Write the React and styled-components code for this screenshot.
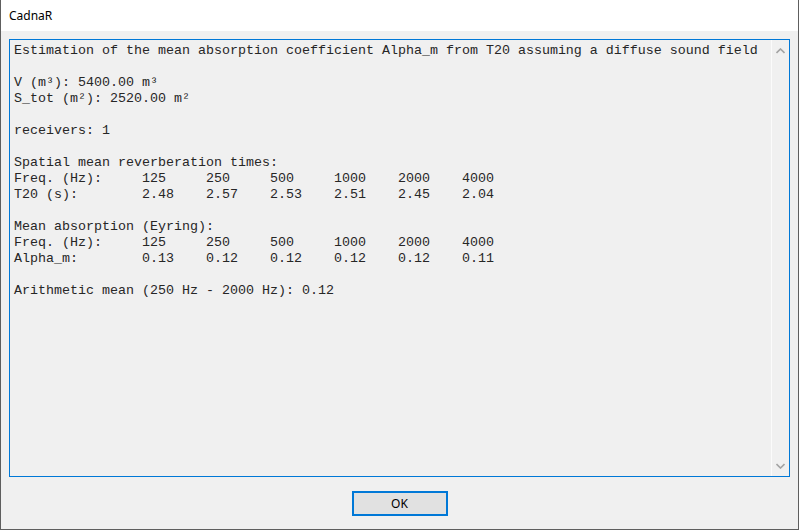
import React from 'react';
import styled, { createGlobalStyle } from 'styled-components';

const GlobalStyle = createGlobalStyle`
  html, body {
    margin: 0;
    padding: 0;
    background: #ffffff;
  }
`;

const freqs = ['125', '250', '500', '1000', '2000', '4000'];
const t20 = ['2.48', '2.57', '2.53', '2.51', '2.45', '2.04'];
const alpha = ['0.13', '0.12', '0.12', '0.12', '0.12', '0.11'];

// one tab-aligned row of the report: label column is 16 chars, values 8 chars each
const row = (label, values) =>
  label.padEnd(16) + values.map((v) => v.padEnd(8)).join('').trimEnd();

const report = [
  'Estimation of the mean absorption coefficient Alpha_m from T20 assuming a diffuse sound field',
  '',
  'V (m³): 5400.00 m³',
  'S_tot (m²): 2520.00 m²',
  '',
  'receivers: 1',
  '',
  'Spatial mean reverberation times:',
  row('Freq. (Hz):', freqs),
  row('T20 (s):', t20),
  '',
  'Mean absorption (Eyring):',
  row('Freq. (Hz):', freqs),
  row('Alpha_m:', alpha),
  '',
  'Arithmetic mean (250 Hz - 2000 Hz): 0.12',
].join('\n');

export default function App() {
  return (
    <>
      <GlobalStyle />
      <Window>
        <TitleBar>CadnaR</TitleBar>
        <Client>
          <TextBox>
            <ReportText>{report}</ReportText>
            <ScrollBar>
              <Arrow viewBox="0 0 9 6">
                <path d="M0.5 5 L4.5 1 L8.5 5" />
              </Arrow>
              <Arrow viewBox="0 0 9 6">
                <path d="M0.5 1 L4.5 5 L8.5 1" />
              </Arrow>
            </ScrollBar>
          </TextBox>
          <Footer>
            <OkButton>OK</OkButton>
          </Footer>
        </Client>
      </Window>
    </>
  );
}

const Window = styled.div`
  width: 799px;
  height: 530px;
  box-sizing: border-box;
  display: flex;
  flex-direction: column;
  border-left: 1px solid #5e5e5e;
  border-right: 1px solid #5e5e5e;
  border-bottom: 1px solid #5e5e5e;
  background: #f0f0f0;
`;

const TitleBar = styled.div`
  height: 31px;
  flex: none;
  background: #ffffff;
  display: flex;
  align-items: center;
  padding-left: 8px;
  padding-bottom: 1px;
  box-sizing: border-box;
  font-family: 'Noto Sans', 'Open Sans', sans-serif;
  font-size: 12px;
  color: #000000;
`;

const Client = styled.div`
  flex: 1;
  display: flex;
  flex-direction: column;
  padding: 8px 8px 0 8px;
`;

const TextBox = styled.div`
  height: 438px;
  box-sizing: border-box;
  border: 1px solid #0078d7;
  display: flex;
  background: #f0f0f0;
`;

const ReportText = styled.pre`
  flex: 1;
  margin: 0;
  padding: 3px 4px 2px;
  font-family: 'Courier New', 'Liberation Mono', monospace;
  font-size: 13.33px;
  line-height: 16px;
  color: #262626;
  white-space: pre;
  overflow: hidden;
`;

const ScrollBar = styled.div`
  width: 17px;
  flex: none;
  border-left: 1px solid #fbfbfb;
  background: #f0f0f0;
  display: flex;
  flex-direction: column;
  justify-content: space-between;
  align-items: center;
  padding: 8px 0 7px;
`;

const Arrow = styled.svg`
  width: 9px;
  height: 6px;
  fill: none;
  stroke: #a3a3a3;
  stroke-width: 1.6;
`;

const Footer = styled.div`
  display: flex;
  justify-content: center;
  padding-top: 14px;
`;

const OkButton = styled.button`
  width: 96px;
  height: 25px;
  box-sizing: border-box;
  border: 2px solid #0078d7;
  background: #e1e1e1;
  font-family: 'Noto Sans', 'Open Sans', sans-serif;
  font-size: 12px;
  color: #000000;
  padding: 0;
`;
